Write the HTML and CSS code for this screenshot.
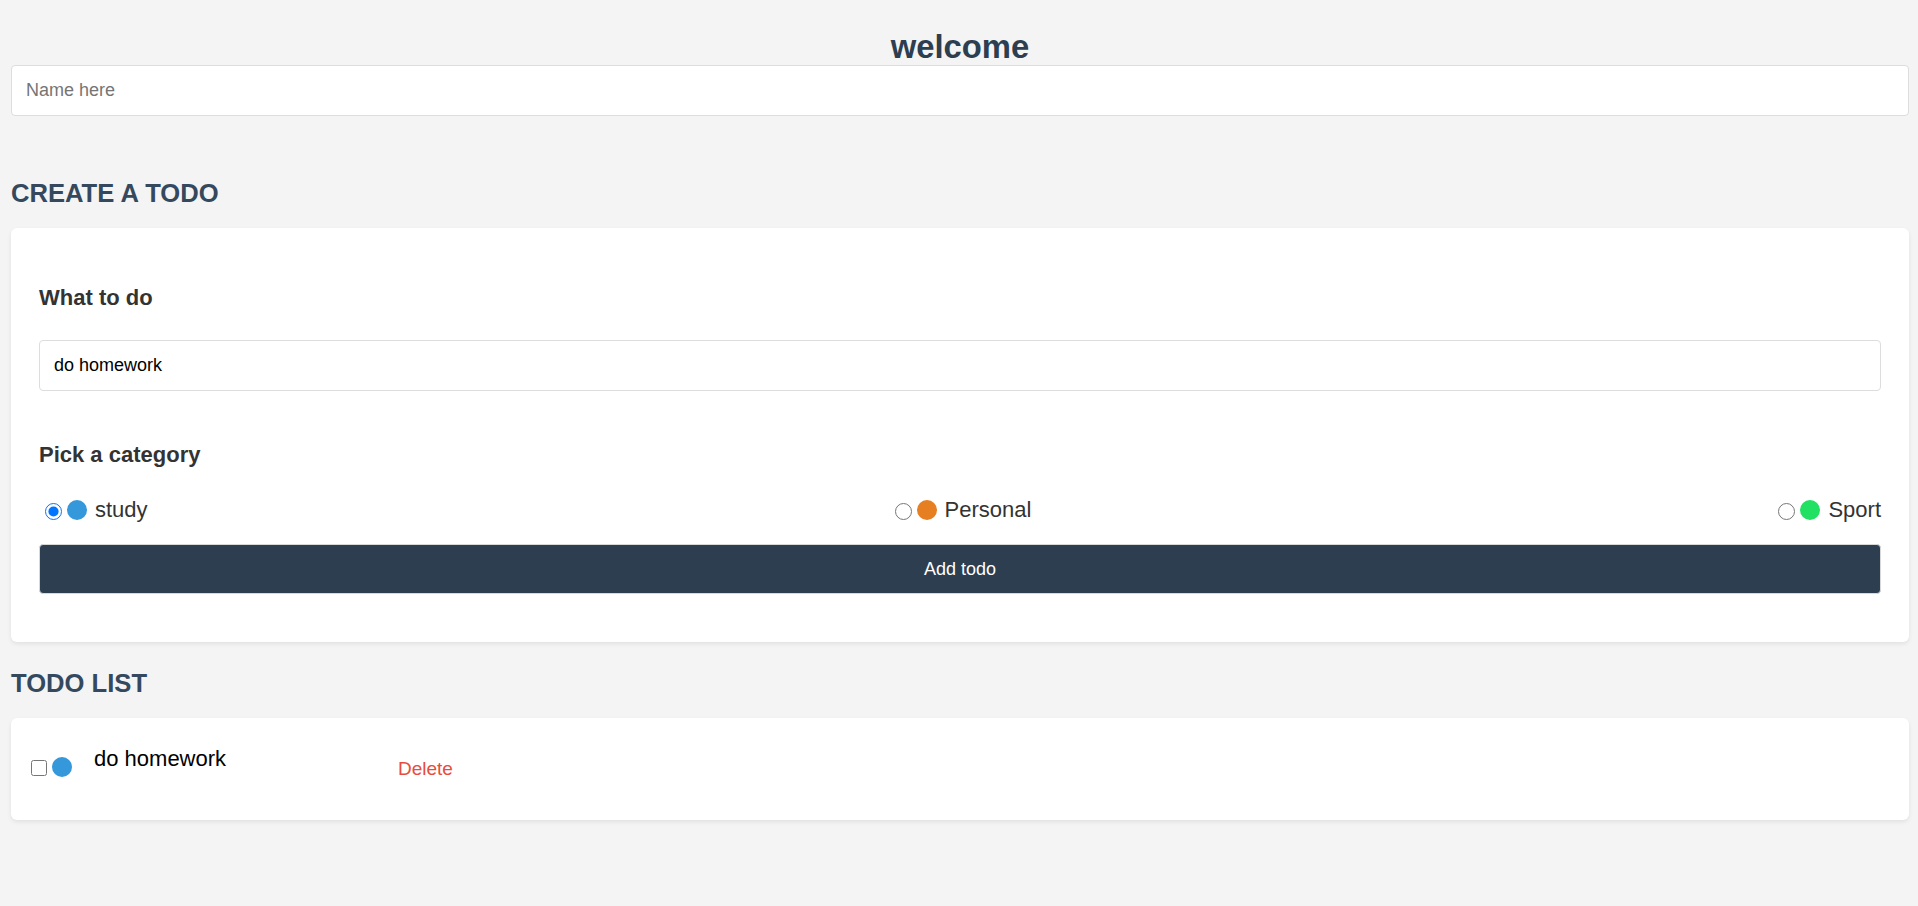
FILE: index.html
```html
<!DOCTYPE html>
<html lang="en">
<head>
<meta charset="utf-8">
<title>Todo</title>
<link rel="stylesheet" href="styles.css">
</head>
<body>
<main class="app">
  <section class="greeting">
    <h1 class="title">welcome</h1>
    <input class="text-input name-input" type="text" placeholder="Name here">
  </section>

  <section class="create">
    <h2 class="section-title create-title">CREATE A TODO</h2>
    <form class="card create-card">
      <h4 class="field-label first-label">What to do</h4>
      <input class="text-input todo-input" type="text" value="do homework">
      <h4 class="field-label second-label">Pick a category</h4>
      <div class="options">
        <label class="option">
          <input class="radio" type="radio" name="category" value="study" checked>
          <span class="bubble bubble-study"></span>
          <span class="option-text">study</span>
        </label>
        <label class="option">
          <input class="radio" type="radio" name="category" value="personal">
          <span class="bubble bubble-personal"></span>
          <span class="option-text">Personal</span>
        </label>
        <label class="option">
          <input class="radio" type="radio" name="category" value="sport">
          <span class="bubble bubble-sport"></span>
          <span class="option-text">Sport</span>
        </label>
      </div>
      <button class="add-btn" type="button">Add todo</button>
    </form>
  </section>

  <section class="list">
    <h2 class="section-title list-title">TODO LIST</h2>
    <div class="card todo-card">
      <div class="todo-item">
        <input class="check" type="checkbox">
        <span class="bubble bubble-study item-bubble"></span>
        <span class="todo-text">do homework</span>
        <button class="delete-btn" type="button">Delete</button>
      </div>
    </div>
  </section>
</main>
</body>
</html>
```

FILE: styles.css
```css
* {
  box-sizing: border-box;
}

html, body {
  margin: 0;
  padding: 0;
  background: #f4f4f4;
}

body {
  font-family: "Liberation Sans", Arial, sans-serif;
  color: #333;
}

.app {
  display: flex;
  flex-direction: column;
  padding: 0 9px 40px 11px;
}

.greeting {
  display: flex;
  flex-direction: column;
}

.title {
  margin: 28px 0 0;
  font-size: 32.8px;
  line-height: 37px;
  font-weight: 700;
  text-align: center;
  color: #2c3e50;
}

.text-input {
  display: block;
  width: 100%;
  height: 51px;
  margin: 0;
  padding: 0 14px;
  border: 1px solid #dddddd;
  border-radius: 4px;
  background: #fff;
  font-family: "Liberation Sans", Arial, sans-serif;
  font-size: 18px;
  color: #000;
  outline: none;
}

.text-input::placeholder {
  color: #757575;
}

.section-title {
  margin: 0;
  font-size: 25.6px;
  line-height: 29px;
  font-weight: 700;
  color: #34495e;
}

.create-title {
  margin-top: 63px;
  margin-bottom: 20px;
}

.list-title {
  margin-top: 27px;
  margin-bottom: 20px;
}

.card {
  background: #fff;
  border-radius: 6px;
  box-shadow: 0 2px 4px rgba(0, 0, 0, 0.08);
}

.create-card {
  display: flex;
  flex-direction: column;
  padding: 28px 28px 48px;
  margin: 0;
}

.field-label {
  margin: 0;
  font-size: 22px;
  line-height: 25px;
  font-weight: 700;
  color: #333;
}

.first-label {
  margin-top: 29px;
}

.todo-input {
  margin-top: 30px;
}

.second-label {
  margin-top: 51px;
}

.options {
  display: flex;
  justify-content: space-between;
  align-items: center;
  height: 25px;
  margin-top: 30px;
}

.option {
  display: flex;
  align-items: center;
  height: 25px;
}

.radio {
  width: 17px;
  height: 17px;
  margin: 4px 5px 0 6px;
}

.bubble {
  display: block;
  width: 20px;
  height: 20px;
  border-radius: 50%;
  flex: none;
}

.bubble-study {
  background: #3498db;
}

.bubble-personal {
  background: #e67e22;
}

.bubble-sport {
  background: #22e162;
}

.option-text {
  margin-left: 8px;
  font-size: 22px;
  line-height: 25px;
  color: #333;
}

.add-btn {
  display: block;
  width: 100%;
  height: 50px;
  margin-top: 22px;
  border: 1px solid #d8d8d8;
  border-radius: 4px;
  background: #2c3e50;
  color: #fff;
  font-family: "Liberation Sans", Arial, sans-serif;
  font-size: 18px;
}

.todo-card {
  height: 102px;
  padding: 25px 16px 0;
}

.todo-item {
  display: flex;
  align-items: flex-start;
}

.check {
  width: 16px;
  height: 16px;
  margin: 17px 0 0 4px;
  flex: none;
}

.item-bubble {
  margin: 14px 0 0 5px;
}

.todo-text {
  width: 304px;
  margin: 3px 0 0 22px;
  font-size: 22px;
  line-height: 25px;
  color: #000;
}

.delete-btn {
  margin: 15px 0 0;
  padding: 0;
  border: none;
  background: none;
  font-family: "Liberation Sans", Arial, sans-serif;
  font-size: 19px;
  line-height: 22px;
  color: #e74c3c;
}
```
